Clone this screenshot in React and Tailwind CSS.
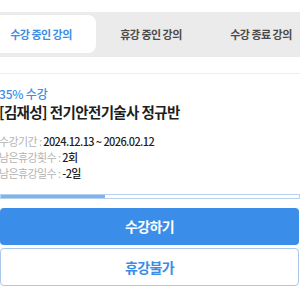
import React from 'react';

const tabs = ['수강 중인 강의', '휴강 중인 강의', '수강 종료 강의'];

const info = [
  { label: '수강기간', value: '2024.12.13 ~ 2026.02.12' },
  { label: '남은휴강횟수', value: '2회' },
  { label: '남은휴강일수', value: '-2일' },
];

export default function App() {
  return (
    <div
      className="w-[300px] h-[300px] overflow-hidden bg-white"
      style={{ fontFamily: '"Noto Sans CJK KR", "Noto Sans", sans-serif' }}
    >
      {/* tabs */}
      <div className="mt-[12px] -ml-[17px] w-[336px] bg-[#ebebeb] pt-[3px] pb-[4px] px-[3px] grid grid-cols-3">
        {tabs.map((t, i) => (
          <div
            key={t}
            className={
              i === 0
                ? 'h-[38px] flex items-center justify-center rounded-lg bg-white text-[11px] font-semibold tracking-[-0.5px] text-[#3b8de6]'
                : 'h-[38px] flex items-center justify-center text-[11px] font-semibold tracking-[-0.5px] text-[#4a4a4a]'
            }
          >
            {t}
          </div>
        ))}
      </div>

      <div className="mt-[16px] h-px bg-[#eeeeee]" />

      <div className="mt-[12px] -ml-[1px]">
        <div className="h-[16px] leading-[16px] text-[12px] font-medium tracking-[-0.2px] text-[#3b8de6]">35% 수강</div>
        <div className="h-[20px] leading-[20px] text-[14.5px] font-semibold tracking-[-0.6px] text-[#1e1e1e]">
          [김재성] 전기안전기술사 정규반
        </div>
        <div className="mt-[11px] flex flex-col">
          {info.map((r) => (
            <div key={r.label} className="h-[16px] leading-[16px] text-[11px] tracking-[-0.6px]">
              <span className="text-[#b4b4b4]">{r.label} : </span>
              <span className="font-medium text-[#222222]">{r.value}</span>
            </div>
          ))}
        </div>
      </div>

      {/* progress */}
      <div className="mt-[13px] h-[5px] w-[300px] border border-[#b7d1ec] bg-white">
        <div className="h-full bg-[#7db4ef]" style={{ width: '35%' }} />
      </div>

      <div className="mt-[9px] w-[299px] h-[37px] rounded-[4px] bg-[#3a8ee9] flex items-center justify-center text-[14px] font-semibold tracking-[-0.6px] text-white">
        수강하기
      </div>
      <div className="mt-[3px] w-[299px] h-[38px] rounded-[4px] border border-[#abc8ea] bg-white flex items-center justify-center text-[14px] font-semibold tracking-[-0.6px] text-[#3b8de6]">
        휴강불가
      </div>
    </div>
  );
}
